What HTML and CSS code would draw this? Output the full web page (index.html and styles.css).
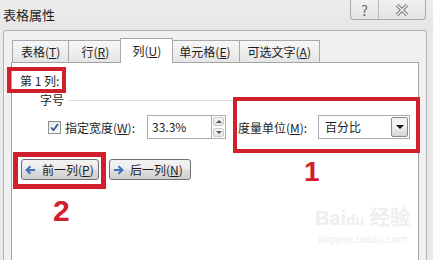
FILE: index.html
```html
<!DOCTYPE html>
<html lang="zh-CN">
<head>
  <meta charset="UTF-8" />
  <title>表格属性</title>
  <link rel="stylesheet" href="styles.css">
</head>
<body>

<div class="dialog">
  <div class="titlebar">
    <span class="title">表格属性</span>
    <div class="caption-btns">
      <span class="cap-btn help">?</span>
      <span class="cap-btn close">
        <svg width="14" height="12" viewBox="0 0 14 12">
          <path d="M2 1 L12 11 M12 1 L2 11" stroke="#7a7a7a" stroke-width="3.4" fill="none"/>
          <path d="M2 1 L12 11 M12 1 L2 11" stroke="#f4f4f4" stroke-width="1.4" fill="none"/>
        </svg>
      </span>
    </div>
  </div>

  <div class="frame">
    <div class="tabs">
      <div class="tab">表格(<u>T</u>)</div>
      <div class="tab">行(<u>R</u>)</div>
      <div class="tab active">列(<u>U</u>)</div>
      <div class="tab">单元格(<u>E</u>)</div>
      <div class="tab">可选文字(<u>A</u>)</div>
    </div>

    <div class="panel">
      <div class="col-label">第 1 列:</div>

      <div class="group-head">
        <span>字号</span>
        <span class="rule"></span>
      </div>

      <div class="width-row">
        <span class="check">
          <svg width="11" height="11" viewBox="0 0 11 11">
            <path d="M2 5.5 L4.5 8.2 L9 2" stroke="#34569a" stroke-width="1.8" fill="none"/>
          </svg>
        </span>
        <span class="field-label">指定宽度(<u>W</u>):</span>
        <span class="num-input">33.3%</span>
        <span class="spinner">
          <span class="spin-btn"><i class="tri-up"></i></span>
          <span class="spin-btn"><i class="tri-down"></i></span>
        </span>
        <span class="unit-label">度量单位(<u>M</u>):</span>
        <span class="select">
          <span class="select-value">百分比</span>
          <span class="select-arrow"><i class="tri-drop"></i></span>
        </span>
      </div>

      <div class="nav-row">
        <button class="btn btn-prev">
          <svg width="11" height="10" viewBox="0 0 11 10">
            <path d="M10 5 H2 M5.5 1.2 L1.6 5 L5.5 8.8" stroke="#3f72b8" stroke-width="2" fill="none"/>
          </svg>
          <span>前一列(<u>P</u>)</span>
        </button>
        <button class="btn btn-next">
          <svg width="11" height="10" viewBox="0 0 11 10">
            <path d="M1 5 H9 M5.5 1.2 L9.4 5 L5.5 8.8" stroke="#3f72b8" stroke-width="2" fill="none"/>
          </svg>
          <span>后一列(<u>N</u>)</span>
        </button>
      </div>

      <div class="watermark">
        <div class="wm-logo">Bai<span class="wm-du">du</span> 经验</div>
        <div class="wm-url">jingyan.baidu.com</div>
      </div>
    </div>
  </div>

  <!-- red annotation marks drawn over the screenshot -->
  <div class="mark mark-col"></div>
  <div class="mark mark-unit"></div>
  <div class="mark mark-nav"></div>
  <div class="step step-1">1</div>
  <div class="step step-2">2</div>
</div>

</body>
</html>
```

FILE: styles.css
```css
body {
  margin: 0;
  background: #e9e9e9;
  font-family: "Noto Sans CJK SC", "Microsoft YaHei", sans-serif;
  font-size: 12px;
  color: #1e1e1e;
}
u {
  text-decoration: underline;
  text-underline-offset: 1px;
}
.dialog {
  position: relative;
  width: 433px;
  height: 260px;
  overflow: hidden;
}
.titlebar {
  height: 30px;
  display: flex;
  justify-content: space-between;
  align-items: flex-start;
  background: linear-gradient(#ececec, #e6e6e6);
}
.title {
  font-size: 13px;
  line-height: 30px;
  padding-left: 3px;
}
.caption-btns {
  display: flex;
  margin-right: 7px;
  height: 19px;
  border: 1px solid #a9a9a9;
  border-top: none;
  border-radius: 0 0 4px 4px;
  background: linear-gradient(#f0f0f0, #e4e4e4);
}
.cap-btn {
  display: flex;
  align-items: center;
  justify-content: center;
  color: #6a6a6a;
}
.help {
  width: 27px;
  border-right: 1px solid #b9b9b9;
  font-size: 14px;
}
.close {
  width: 46px;
}
.frame {
  margin-left: 3px;
  width: 424px;
  height: 230px;
  box-sizing: border-box;
  border: 1px solid #b3b3b3;
  border-bottom: none;
  border-radius: 3px 3px 0 0;
  background: #f0f0f0;
  padding: 7px 0 0 7px;
}
.tabs {
  display: flex;
  align-items: flex-end;
  height: 24px;
  padding-left: 1px;
}
.tab {
  height: 22px;
  line-height: 21px;
  min-width: 53px;
  padding: 0 8px;
  box-sizing: border-box;
  text-align: center;
  border: 1px solid #a8a8a8;
  border-bottom: none;
  background: linear-gradient(#f7f7f7, #e5e5e5);
}
.tab + .tab {
  border-left: none;
}
.tab.active {
  height: 25px;
  line-height: 23px;
  margin: 0 -2px -1px;
  padding: 0 10px;
  border-left: 1px solid #a8a8a8;
  background: #fff;
  position: relative;
  z-index: 1;
}
.panel {
  position: relative;
  width: 408px;
  height: 198px;
  box-sizing: border-box;
  border: 1px solid #a3a3a3;
  border-bottom: none;
  background: #fff;
}
.col-label {
  margin: 10px 0 0 8px;
  line-height: 16px;
}
.group-head {
  display: flex;
  align-items: center;
  margin: 3px 8px 0 28px;
  line-height: 16px;
}
.group-head .rule {
  flex: 1;
  border-top: 1px solid #dcdcdc;
  margin-left: 4px;
}
.width-row {
  display: flex;
  align-items: center;
  height: 24px;
  margin-top: 7px;
  padding-left: 36px;
}
.check {
  width: 13px;
  height: 13px;
  box-sizing: border-box;
  border: 1px solid #8f8f8f;
  background: linear-gradient(#e9e9e9, #fafafa);
  display: flex;
  align-items: center;
  justify-content: center;
}
.field-label {
  margin-left: 4px;
  width: 82px;
}
.num-input {
  width: 65px;
  height: 24px;
  box-sizing: border-box;
  border: 1px solid #abadb3;
  padding-left: 4px;
  line-height: 22px;
}
.spinner {
  width: 14px;
  height: 24px;
  display: flex;
  flex-direction: column;
  box-sizing: border-box;
  border: 1px solid #abadb3;
  border-left: none;
}
.spin-btn {
  flex: 1;
  display: flex;
  align-items: center;
  justify-content: center;
  margin: 1px;
  border: 1px solid #c9c9c9;
  border-radius: 2px;
  background: linear-gradient(#f7f7f7, #e4e4e4);
}
.tri-up, .tri-down, .tri-drop {
  width: 0;
  height: 0;
  border-left: 3px solid transparent;
  border-right: 3px solid transparent;
}
.tri-up {
  border-bottom: 3px solid #555;
}
.tri-down {
  border-top: 3px solid #555;
}
.unit-label {
  margin-left: 12px;
  width: 80px;
}
.select {
  width: 92px;
  height: 24px;
  box-sizing: border-box;
  border: 1px solid #abadb3;
  display: flex;
  justify-content: space-between;
}
.select-value {
  padding-left: 6px;
  line-height: 22px;
}
.select-arrow {
  width: 15px;
  margin: 1px;
  border: 1px solid #8b8b8b;
  border-radius: 2px;
  background: linear-gradient(#f2f2f2 45%, #d4d4d4);
  display: flex;
  align-items: center;
  justify-content: center;
}
.tri-drop {
  border-left-width: 4px;
  border-right-width: 4px;
  border-top: 4px solid #111;
}
.nav-row {
  display: flex;
  gap: 10px;
  margin-top: 20px;
  padding-left: 9px;
}
.btn {
  height: 21px;
  padding: 0 0 0 3px;
  display: flex;
  align-items: center;
  gap: 6px;
  font: inherit;
  color: #1e1e1e;
  border: 1px solid #707070;
  border-radius: 3px;
  background: linear-gradient(#f3f3f3 0%, #ebebeb 48%, #dddddd 52%, #d0d0d0 100%);
}
.btn-prev {
  width: 78px;
}
.btn-next {
  width: 82px;
}
.watermark {
  position: absolute;
  left: 303px;
  top: 143px;
  color: #eeeeee;
  text-align: center;
}
.wm-logo {
  font-family: "Liberation Sans", Arial, sans-serif;
  font-size: 20px;
  font-weight: bold;
  line-height: 24px;
}
.wm-du {
  font-size: 15px;
}
.wm-url {
  font-family: "Liberation Sans", Arial, sans-serif;
  font-size: 11px;
  line-height: 14px;
}
.mark {
  position: absolute;
  border: 4px solid #d0202c;
}
.mark-col {
  left: 7px;
  top: 67px;
  width: 51px;
  height: 18px;
}
.mark-unit {
  left: 233px;
  top: 97px;
  width: 179px;
  height: 48px;
}
.mark-nav {
  left: 13px;
  top: 152px;
  width: 83px;
  height: 27px;
  border-width: 5px;
}
.step {
  position: absolute;
  color: #d0202c;
  font-family: "Liberation Sans", Arial, sans-serif;
  font-weight: bold;
  line-height: 1;
}
.step-1 {
  left: 304px;
  top: 158px;
  font-size: 28px;
}
.step-2 {
  left: 53px;
  top: 196px;
  font-size: 30px;
}
```
